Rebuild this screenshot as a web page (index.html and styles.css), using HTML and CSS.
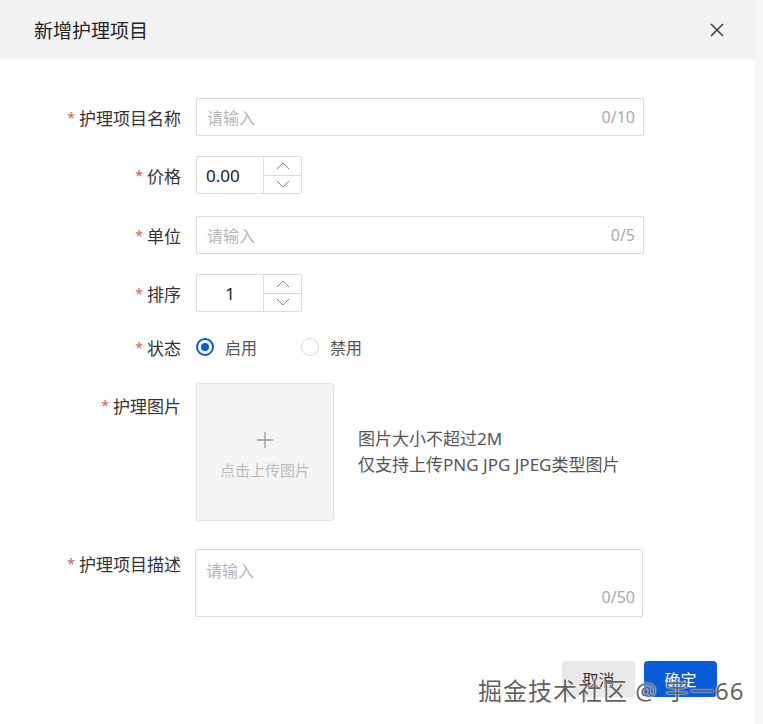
FILE: index.html
```html
<!DOCTYPE html>
<html lang="zh">
<head>
<meta charset="utf-8">
<link rel="stylesheet" href="styles.css">
</head>
<body>
<div class="dialog">
  <div class="header">
    <span class="title">新增护理项目</span>
    <svg class="close" width="16" height="16" viewBox="0 0 16 16"><path d="M2 2L14 14M14 2L2 14" stroke="#444" stroke-width="1.6" fill="none"/></svg>
  </div>
  <div class="form">
    <div class="row r1">
      <label class="label"><span class="req">*</span>护理项目名称</label>
      <div class="input wide"><span class="ph">请输入</span><span class="count">0/10</span></div>
    </div>
    <div class="row r2">
      <label class="label"><span class="req">*</span>价格</label>
      <div class="num">
        <div class="num-val">0.00</div>
        <div class="steps">
          <div class="step"><svg width="14" height="8" viewBox="0 0 14 8"><path d="M1 7L7 1L13 7" stroke="#888" stroke-width="1" fill="none"/></svg></div>
          <div class="step"><svg width="14" height="8" viewBox="0 0 14 8"><path d="M1 1L7 7L13 1" stroke="#888" stroke-width="1" fill="none"/></svg></div>
        </div>
      </div>
    </div>
    <div class="row r3">
      <label class="label"><span class="req">*</span>单位</label>
      <div class="input wide"><span class="ph">请输入</span><span class="count">0/5</span></div>
    </div>
    <div class="row r4">
      <label class="label"><span class="req">*</span>排序</label>
      <div class="num">
        <div class="num-val center">1</div>
        <div class="steps">
          <div class="step"><svg width="14" height="8" viewBox="0 0 14 8"><path d="M1 7L7 1L13 7" stroke="#888" stroke-width="1" fill="none"/></svg></div>
          <div class="step"><svg width="14" height="8" viewBox="0 0 14 8"><path d="M1 1L7 7L13 1" stroke="#888" stroke-width="1" fill="none"/></svg></div>
        </div>
      </div>
    </div>
    <div class="row r5">
      <label class="label"><span class="req">*</span>状态</label>
      <div class="radios">
        <span class="radio on"><span class="dot"></span>启用</span>
        <span class="radio"><span class="dot"></span>禁用</span>
      </div>
    </div>
    <div class="row r6 top">
      <label class="label lab-up"><span class="req">*</span>护理图片</label>
      <div class="upload">
        <svg width="18" height="18" viewBox="0 0 18 18"><path d="M9 1V17M1 9H17" stroke="#999" stroke-width="1.3"/></svg>
        <span class="up-text">点击上传图片</span>
      </div>
      <div class="hint">图片大小不超过2M<br>仅支持上传PNG JPG JPEG类型图片</div>
    </div>
    <div class="row r7 top">
      <label class="label lab-ta"><span class="req">*</span>护理项目描述</label>
      <div class="textarea"><span class="ph">请输入</span><span class="count">0/50</span></div>
    </div>
  </div>
  <div class="footer">
    <button class="btn cancel">取消</button>
    <button class="btn ok">确定</button>
  </div>
  <div class="watermark">掘金技术社区 @ 宇一66</div>
</div>
</body>
</html>
```
FILE: styles.css
```css
* { box-sizing: border-box; }
body {
  margin: 0;
  background: #f9f5f4;
  font-family: "Noto Sans", "Noto Sans CJK SC", sans-serif;
  color: #333;
}
.dialog {
  position: relative;
  width: 755px;
  height: 724px;
  background: #fff;
}
.header {
  height: 59px;
  background: #f2f2f2;
  display: flex;
  align-items: center;
  justify-content: space-between;
  padding: 0 30px 0 34px;
}
.title {
  font-size: 19px;
  color: #222;
}
.form {
  padding-top: 39px;
}
.row {
  display: flex;
  align-items: center;
}
.row.top { align-items: flex-start; }
.label {
  width: 181px;
  margin-right: 15px;
  text-align: right;
  font-size: 17px;
  color: #333;
  white-space: nowrap;
}
.req {
  color: #e05a5a;
  font-size: 14px;
  margin-right: 4px;
  position: relative;
  top: -2px;
}
.r1 { height: 38px; margin-bottom: 20px; }
.r2 { height: 38px; margin-bottom: 22px; }
.r3 { height: 38px; margin-bottom: 20px; }
.r4 { height: 38px; margin-bottom: 25px; }
.r5 { height: 20px; margin-bottom: 26px; }
.r6 { margin-bottom: 28px; }
.input {
  height: 38px;
  border: 1px solid #dcdcdc;
  border-radius: 2px;
  display: flex;
  align-items: center;
  justify-content: space-between;
  padding: 0 8px 0 10px;
  font-size: 16px;
}
.wide { width: 448px; }
.ph { color: #b5b5b5; }
.count { color: #aaa; font-size: 16px; }
.num {
  width: 106px;
  height: 38px;
  border: 1px solid #dcdcdc;
  border-radius: 2px;
  display: flex;
}
.num-val {
  width: 67px;
  border-right: 1px solid #dcdcdc;
  display: flex;
  align-items: center;
  padding-left: 9px;
  font-size: 17px;
  color: #222;
}
.num-val.center { justify-content: center; padding-left: 0; }
.steps {
  flex: 1;
  display: flex;
  flex-direction: column;
}
.step {
  flex: 1;
  display: flex;
  align-items: center;
  justify-content: center;
}
.step + .step { border-top: 1px solid #dcdcdc; }
.radios {
  display: flex;
  align-items: center;
  font-size: 16px;
  color: #555;
}
.radio {
  display: flex;
  align-items: center;
  margin-right: 44px;
}
.radio .dot {
  width: 18px;
  height: 18px;
  border-radius: 50%;
  border: 1px solid #dadada;
  margin-right: 11px;
  position: relative;
}
.radio.on .dot { border: 2px solid #0a5bd8; }
.radio.on .dot::after {
  content: "";
  position: absolute;
  left: 3px;
  top: 3px;
  width: 8px;
  height: 8px;
  border-radius: 50%;
  background: #0a5bd8;
}
.lab-up { padding-top: 10px; }
.upload {
  width: 138px;
  height: 138px;
  background: #f5f5f5;
  border: 1px solid #e2e2e2;
  border-radius: 3px;
  display: flex;
  flex-direction: column;
  align-items: center;
  justify-content: center;
  padding-top: 6px;
}
.up-text {
  margin-top: 10px;
  font-size: 15px;
  color: #bbb;
}
.hint {
  margin-left: 24px;
  margin-top: 43px;
  font-size: 17px;
  line-height: 26px;
  color: #555;
}
.lab-ta { padding-top: 2px; }
.textarea {
  width: 448px;
  height: 68px;
  margin-left: -1px;
  border: 1px solid #dcdcdc;
  border-radius: 2px;
  position: relative;
  padding: 8px 10px;
  font-size: 16px;
}
.textarea .count {
  position: absolute;
  right: 7px;
  bottom: 8px;
}
.footer {
  position: absolute;
  top: 661px;
  right: 38px;
  display: flex;
  gap: 9px;
}
.btn {
  width: 73px;
  height: 36px;
  border: none;
  border-radius: 4px;
  font-family: inherit;
  font-size: 16px;
}
.cancel { background: #e8e8e8; color: #333; }
.ok { background: #0a5bd8; color: #fff; }
.watermark {
  position: absolute;
  left: 478px;
  top: 672px;
  font-size: 24px;
  letter-spacing: 1px;
  color: rgba(70, 70, 70, 0.85);
  text-shadow: 0 0 2px #fff, 0 0 1px #fff;
  white-space: nowrap;
}
```
